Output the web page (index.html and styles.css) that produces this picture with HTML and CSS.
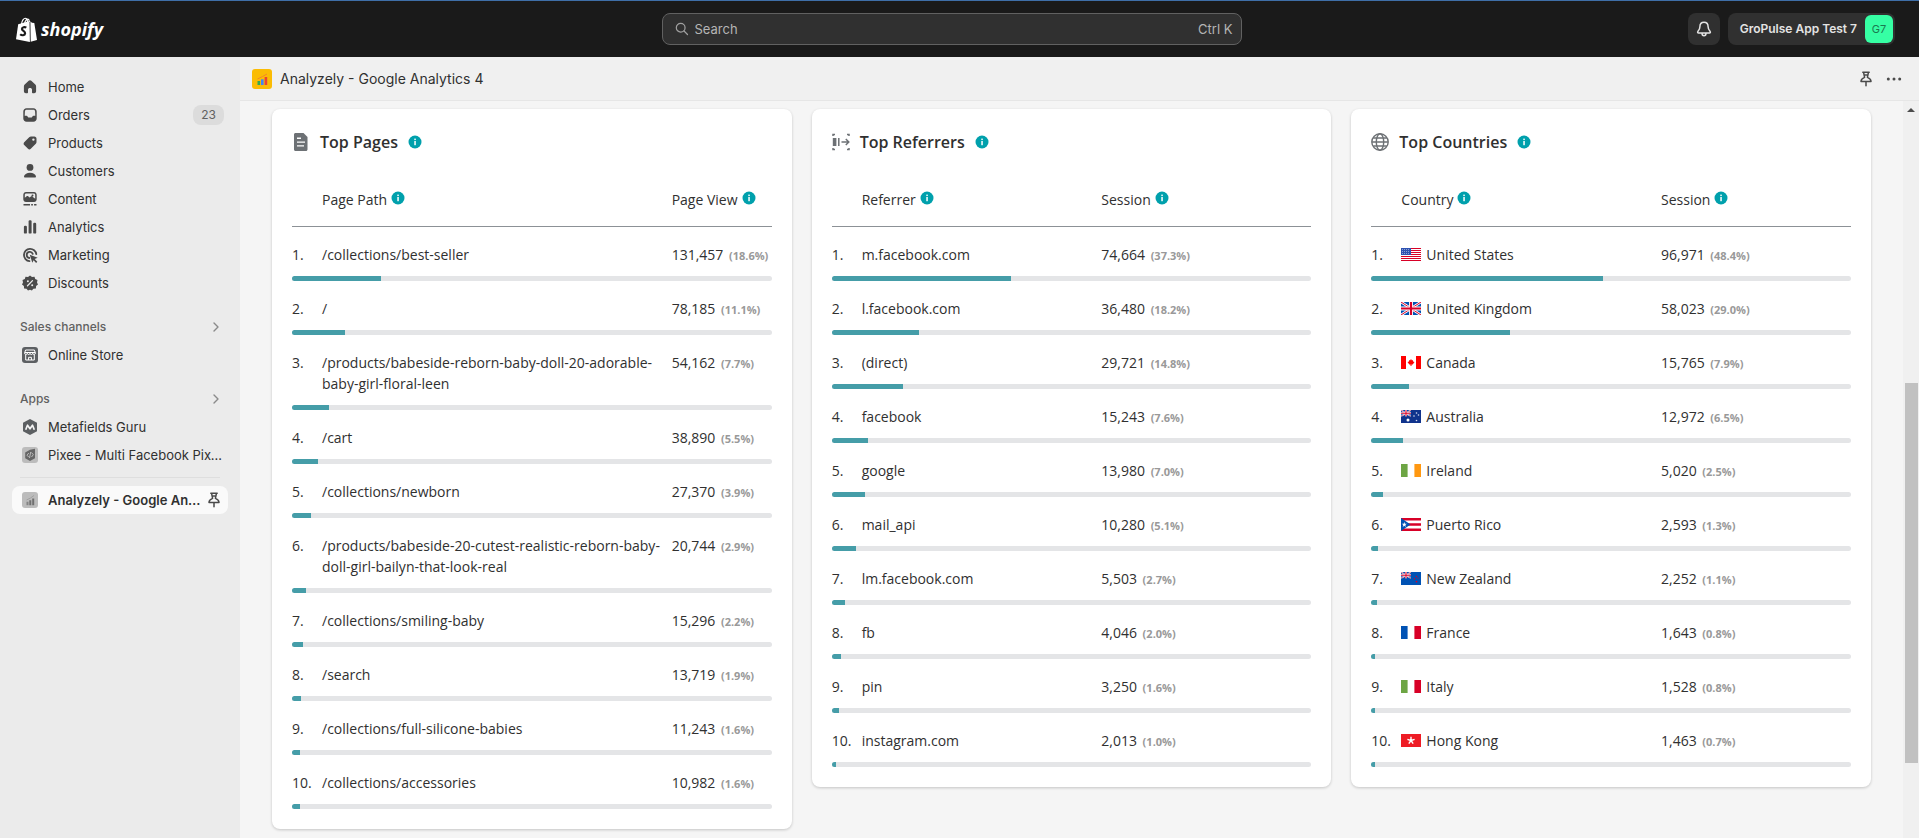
FILE: index.html
```html
<!DOCTYPE html>
<html lang="en">
<head>
<meta charset="utf-8">
<title>Analyzely - Google Analytics 4</title>
<link rel="stylesheet" href="styles.css">
</head>
<body>
<svg class="defs" aria-hidden="true">
  <symbol id="info" viewBox="0 0 14 14"><circle cx="7" cy="7" r="6.5" fill="#00a0ac"/><rect x="6.3" y="6" width="1.5" height="4.2" fill="#fff"/><rect x="6.3" y="3.6" width="1.5" height="1.5" fill="#fff"/></symbol>
  <symbol id="chev" viewBox="0 0 16 16"><path d="M6 4l4 4-4 4" fill="none" stroke="#8a8a8a" stroke-width="1.4" stroke-linecap="round" stroke-linejoin="round"/></symbol>
  <symbol id="pin" viewBox="0 0 16 16"><path d="M4.800 1.300h6.400M5.600 1.500l1 4.900c-2 .8-3.600 1.900-3.600 4.100h10c0-2.200-1.600-3.300-3.600-4.100l1-4.900M8 10.600v4.200M7.400 4h1.200" fill="none" stroke="#4a4a4a" stroke-width="1.500" stroke-linecap="round" stroke-linejoin="round"/></symbol>
  <symbol id="jack" viewBox="0 0 20 13"><path fill="#0052b4" d="M0 0h20v13H0z"/><path d="M0 0l20 13M20 0L0 13" stroke="#fff" stroke-width="2.600"/><path d="M0 0l20 13M20 0L0 13" stroke="#d80027" stroke-width="1"/><path d="M10 0v13M0 6.500h20" stroke="#fff" stroke-width="4"/><path d="M10 0v13M0 6.500h20" stroke="#d80027" stroke-width="2.200"/></symbol>
</svg>
<header class="topbar">
  <a class="brand" href="#" aria-label="Shopify home">
    <svg viewBox="0 0 21 25" width="21" height="25"><path fill="none" stroke="#fff" stroke-width="1.200" d="M5.500 7C6 3.500 8 1 9.600 1.300c1.500.2 2 2.500 2 4.500M8.600 6.500C9 4 10.600 1.900 12 2.200c1 .2 1.300 1.300 1.400 2.800"/><path fill="#fff" d="M2.200 7.200l11.300-3.100.4 20.900L0 22.300z"/><path fill="#fff" d="M14.400 4.200l1.500 1.500 2.400.2L21 23.100l-6.300 1.700z"/><path fill="none" stroke="#1a1a1a" stroke-width="2.200" d="M10.300 10.600C8.800 9.700 6 10 6 12c0 1.900 3.300 2 3.100 4.400-.2 2.300-3.400 2.300-4.900.9"/></svg>
    <span>shopify</span>
  </a>
  <label class="search">
    <svg viewBox="0 0 16 16" width="14" height="14"><circle cx="6.500" cy="6.500" r="5" fill="none" stroke="#a0a0a0" stroke-width="1.400"/><path d="M10.300 10.300l4 4" stroke="#a0a0a0" stroke-width="1.400" stroke-linecap="round"/></svg>
    <input type="text" placeholder="Search" aria-label="Search">
    <kbd>Ctrl K</kbd>
  </label>
  <div class="account">
    <button class="bell" aria-label="Notifications"><svg viewBox="0 0 16 16" width="16" height="16"><path d="M8 1.300c-2.600 0-4.100 1.900-4.100 4.400 0 2.600-.9 3.500-2 4.700-.6.700-.2 1.500.6 1.500h11c.8 0 1.200-.8.600-1.500-1.100-1.200-2-2.100-2-4.700 0-2.500-1.500-4.400-4.100-4.400zM6 12.200c0 1.600.9 2.500 2 2.500s2-.9 2-2.500" fill="none" stroke="#e3e3e3" stroke-width="1.500"/></svg></button>
    <button class="store"><span>GroPulse App Test 7</span><span class="avatar">G7</span></button>
  </div>
</header>
<div class="shell">
  <nav class="sidebar">
    <a class="item" href="#"><svg viewBox="0 0 16 16"><path d="M8 1.200c.5 0 .9.200 1.300.6l4 3.800c.5.500.8 1.100.8 1.800v4.800c0 1.100-.9 2-2 2h-1.300c-.5 0-.8-.3-.8-.8v-2.600c0-1-.8-1.700-2-1.700s-2 .7-2 1.700v2.600c0 .5-.3.800-.8.800H3.900c-1.100 0-2-.9-2-2V7.400c0-.7.300-1.300.8-1.800l4-3.800c.4-.4.800-.6 1.300-.6z"/></svg>Home</a>
    <a class="item" href="#"><svg viewBox="0 0 16 16"><path fill-rule="evenodd" d="M4.500 1.200h7c1.800 0 3.200 1.400 3.200 3.200v7.200c0 1.800-1.400 3.200-3.200 3.200h-7c-1.800 0-3.200-1.400-3.200-3.200V4.400c0-1.800 1.400-3.200 3.200-3.200zm.2 1.500c-1 0-1.800.7-1.800 1.700L2.700 8.800h1.800c.6 0 .9.400 1.200.9.300.6.800.9 1.500.9h1.600c.7 0 1.200-.3 1.500-.9.300-.5.600-.9 1.200-.9h1.800l-.2-4.400c0-1-.8-1.700-1.800-1.700z"/></svg>Orders<span class="count">23</span></a>
    <a class="item" href="#"><svg viewBox="0 0 16 16"><path fill-rule="evenodd" d="M9 1.500h3.300c1.300 0 2.200 1 2.200 2.200V7c0 .7-.2 1.300-.7 1.800l-5 5c-.8.800-2 .8-2.800 0L2.200 10c-.8-.8-.8-2 0-2.800l5-5C7.700 1.700 8.300 1.500 9 1.500zM11.400 5.800a1.200 1.200 0 1 0 0-2.400 1.200 1.200 0 0 0 0 2.400z"/></svg>Products</a>
    <a class="item" href="#"><svg viewBox="0 0 16 16"><circle cx="8" cy="4.400" r="3.400"/><path d="M8 9.700c3.200 0 5.200 1.300 5.900 3.300.3.900-.3 1.600-1.100 1.600H3.200c-.8 0-1.400-.7-1.100-1.600.7-2 2.700-3.300 5.900-3.300z"/></svg>Customers</a>
    <a class="item" href="#"><svg viewBox="0 0 16 16"><path fill-rule="evenodd" d="M4 1h8c1.500 0 2.700 1.200 2.700 2.700v4.600c0 1.500-1.200 2.700-2.700 2.700H4c-1.500 0-2.700-1.200-2.700-2.700V3.700C1.300 2.200 2.500 1 4 1zm.2 1.500c-.8 0-1.400.6-1.400 1.400v2.900l1.600-1.400c.6-.5 1.400-.5 2 0l1.200 1.100 1-.8c.6-.5 1.300-.5 1.900 0l2.700 2.100V3.900c0-.8-.6-1.400-1.400-1.400zM10.500 5.400a1 1 0 1 0 0-2 1 1 0 0 0 0 2z"/><path d="M1.500 13h6.500v1.600H1.500zM9.200 13h1.700v1.600H9.200zM12.100 13h2.400v1.600h-2.400z"/></svg>Content</a>
    <a class="item" href="#"><svg viewBox="0 0 16 16"><rect x="1.900" y="6.800" width="3" height="7.800" rx="1.200"/><rect x="6.600" y="1.300" width="3" height="13.300" rx="1.200"/><rect x="11.200" y="3.800" width="3" height="10.800" rx="1.200"/></svg>Analytics</a>
    <a class="item" href="#"><svg viewBox="0 0 16 16"><path d="M14.300 7.200A6.200 6.200 0 1 0 7.500 14.200M10.700 6.800A3.100 3.100 0 1 0 7.400 11" fill="none" stroke="#4a4a4a" stroke-width="1.800" stroke-linecap="round"/><path d="M7.800 7.800l7.900 3-3 1.200 2.600 2.700-1.200 1.200-2.500-2.600-1.300 2.500z"/></svg>Marketing</a>
    <a class="item" href="#"><svg viewBox="0 0 16 16"><path d="M8 .5l2 1.500 2.500-.3.700 2.400 2.300 1L15 7.600l1 2-1.900 1.500-.2 2.500-2.500.2L9.900 15.600 8 14.800l-2 .8-1.500-1.800-2.400-.2-.2-2.500L0 9.600l1-2-.5-2.500 2.300-1 .7-2.400L6 2z"/><path d="M5.500 10.800l5-5.200" stroke="#ebebeb" stroke-width="1.300" stroke-linecap="round"/><circle cx="5.900" cy="6.200" r="1" fill="#ebebeb"/><circle cx="10.200" cy="10.200" r="1" fill="#ebebeb"/></svg>Discounts</a>
    <a class="group" href="#">Sales channels<svg viewBox="0 0 16 16"><use href="#chev"/></svg></a>
    <a class="item" href="#"><svg viewBox="0 0 16 16"><rect width="16" height="16" rx="3" fill="#5c5f62"/><path d="M3.600 3h8.800l1 3c0 2-2.500 2-2.700.3C10.500 8 8.200 8 8 6.300 7.800 8 5.500 8 5.300 6.300 5.100 8 2.600 8 2.600 6zM3.700 8v5h8.600V8M6.600 13v-2.700h2.800V13M3 5.500h10" fill="none" stroke="#fff" stroke-width="1"/></svg>Online Store</a>
    <a class="group" href="#">Apps<svg viewBox="0 0 16 16"><use href="#chev"/></svg></a>
    <a class="item" href="#"><svg viewBox="0 0 16 16"><path fill="#5c5f62" d="M8 0l7 3.800v8.400L8 16l-7-3.800V3.800z"/><path d="M3.700 10.700l1.800-4.500L8 9.800l2.500-3.600 1.800 4.500" fill="none" stroke="#f4f4f4" stroke-width="1.700" stroke-linejoin="round"/></svg>Metafields Guru</a>
    <a class="item" href="#"><svg viewBox="0 0 16 16"><rect width="16" height="16" rx="3" fill="#bcbcbc"/><path fill="#666" d="M8 2.700l5-1v9.500l-5 2.700-4.800-2.700V5.500z"/><path d="M6.800 6L5 8.200l1.800 2M9.500 5.500l1.800 2.200-1.800 2.300M8.700 5l-1.200 6" fill="none" stroke="#bbb" stroke-width="1"/></svg><span class="clip">Pixee - Multi Facebook Pixels</span></a>
    <hr>
    <a class="item current" href="#"><svg viewBox="0 0 16 16"><rect width="16" height="16" rx="3" fill="#bcbcbc"/><path fill="#858585" d="M4.500 9.700h2v3.500h-2z"/><path fill="#707070" d="M7.300 8.300h2v4.900h-2zM10.200 6.500h2v6.700h-2z"/><path d="M4.500 8l4-2L12 3.500" stroke="#999" fill="none" stroke-width=".8"/></svg><span class="clip">Analyzely - Google Analytics 4</span><svg class="pinned" viewBox="0 0 16 16"><use href="#pin"/></svg></a>
  </nav>
  <div class="page">
    <div class="appbar">
      <svg viewBox="0 0 20 20" width="20" height="20"><rect width="20" height="20" rx="3" fill="#fbbc04"/><path fill="#34a853" d="M5.500 12h2.600v4H5.500z"/><path fill="#4285f4" d="M9 10.300h2.600V16H9z"/><path fill="#ea4335" d="M12.600 8h2.600v8h-2.600z"/><path d="M5.500 10l5-2.500L15 5" fill="none" stroke="#f08030" stroke-width=".9"/></svg>
      <h1>Analyzely - Google Analytics 4</h1>
      <button aria-label="Unpin app"><svg viewBox="0 0 16 16" width="16" height="16"><use href="#pin"/></svg></button>
      <button aria-label="More actions"><svg viewBox="0 0 16 16" width="16" height="16" fill="#4a4a4a"><circle cx="2.300" cy="8" r="1.500"/><circle cx="8" cy="8" r="1.500"/><circle cx="13.700" cy="8" r="1.500"/></svg></button>
    </div>
    <div class="view">
      <main class="cards" id="cards"></main>
      <div class="scrollbar"><svg viewBox="0 0 8 4" width="8" height="4"><path d="M4 0l4 4H0z" fill="#4c4c4c"/></svg><div class="thumb"></div></div>
    </div>
  </div>
</div>
<script src="app.js"></script>
</body>
</html>
```
FILE: styles.css
```css
* { box-sizing: border-box; }
body { margin: 0; min-height: 100vh; display: flex; flex-direction: column; background: #f5f5f5; color: #303030; font: 13px/20px Inter, sans-serif; }
a { color: inherit; text-decoration: none; }
button { border: 0; padding: 0; background: none; font: inherit; color: inherit; display: flex; align-items: center; justify-content: center; }
svg { display: block; flex: none; }
.defs { position: absolute; width: 0; height: 0; }

.topbar { height: 57px; display: grid; grid-template-columns: 1fr 580px 1fr; align-items: center; padding: 0 24px 0 8px; background: #1a1a1a; border-top: 1px solid #3f6fa8; }
.brand { display: flex; align-items: center; gap: 4px; padding-left: 8px; color: #fff; font: italic 700 18px/24px "Open Sans", sans-serif; }
.search { height: 32px; display: flex; align-items: center; gap: 6px; padding: 0 8px 0 12px; border: 1px solid #616161; border-radius: 8px; background: #303030; color: #b5b5b5; }
.search input { flex: 1; min-width: 0; padding: 0; border: 0; outline: 0; background: none; color: inherit; font: inherit; }
.search input::placeholder { color: #b5b5b5; opacity: 1; }
.search kbd { font: inherit; }
.account { display: flex; justify-content: flex-end; gap: 8px; }
.bell, .store { height: 32px; border-radius: 8px; background: #303030; }
.bell { width: 32px; }
.store { gap: 8px; padding: 0 2px 0 12px; color: #e3e3e3; font-size: 12px; font-weight: 600; }
.avatar { width: 28px; height: 28px; border-radius: 6px; background: #36ffa4; color: #1a7a50; font-size: 11px; font-weight: 400; line-height: 28px; }

.shell { flex: 1; display: flex; }
.sidebar { width: 240px; flex: none; padding: 16px 12px; background: #ebebeb; }
.item { height: 28px; display: flex; align-items: center; gap: 10px; padding: 0 4px 0 10px; border-radius: 8px; }
.item svg { width: 16px; height: 16px; fill: #4a4a4a; }
.count { margin-left: auto; padding: 0 8px; border-radius: 8px; background: #dcdcdc; color: #616161; font-size: 12px; }
.group { height: 28px; display: flex; align-items: center; justify-content: space-between; margin-top: 16px; padding: 0 4px 0 8px; color: #616161; font-size: 12px; font-weight: 500; }
.group svg { width: 16px; height: 16px; }
.clip { flex: 1; overflow: hidden; white-space: nowrap; text-overflow: ellipsis; }
.sidebar hr { height: 1px; margin: 8px; border: 0; background: #dedede; }
.current { padding-right: 6px; background: #fafafa; font-weight: 600; }
.item .pinned { margin-left: -8px; }

.page { flex: 1; min-width: 0; display: flex; flex-direction: column; }
.appbar { height: 44px; display: flex; align-items: center; gap: 8px; padding: 0 17px 0 12px; background: #f0f0f0; border-bottom: 1px solid #e6e6e6; }
.appbar h1 { flex: 1; margin: 0; font-size: 14px; font-weight: 400; }
.appbar button + button { margin-left: 4px; }
.view { flex: 1; display: flex; }
.cards { flex: 1; display: grid; grid-template-columns: repeat(3, 1fr); gap: 20px; align-items: start; padding: 8px 32px 10px; }
.scrollbar { width: 16px; flex: none; display: flex; flex-direction: column; align-items: center; padding-top: 7px; background: #f0f0f0; }
.thumb { width: 13px; height: 380px; margin-top: 271px; background: #c1c1c1; }

.card { padding: 20px; border-radius: 8px; background: #fff; box-shadow: 0 1px 3px rgba(0, 0, 0, .2); color: #303030; font: 14px/21px "Open Sans", sans-serif; }
.card h2 { display: flex; align-items: center; gap: 10px; margin: 0; font-size: 16px; font-weight: 600; line-height: 26px; color: #303030; }
.card h2 .mark { width: 18px; height: 18px; }
.card h2 .info { width: 14px; height: 14px; }
.card table { width: 100%; margin-top: 20px; border-collapse: separate; border-spacing: 0; table-layout: fixed; }
.card th, .card td { padding: 0; text-align: left; vertical-align: top; font-weight: 400; }
.card th { height: 52px; padding-top: 14px; border-bottom: 1px solid #8c9196; }
.th { display: flex; align-items: flex-start; gap: 4px; white-space: nowrap; }
.th .info { width: 14px; height: 14px; margin-top: 2px; }
.num { width: 30px; }
.pages .value { width: 100px; }
.referrers .value { width: 210px; }
.countries .value { width: 190px; }
.card tr.entry td { padding: 17px 0 11px; }
.card td.value { white-space: nowrap; }
.card td small { margin-left: 2px; color: #999; font-size: 11px; font-weight: 700; line-height: 11px; }
.name { display: flex; align-items: center; gap: 5px; }
.track { height: 5px; overflow: hidden; border-radius: 3px; background: #e4e5e7; }
.fill { height: 5px; background: #459da8; }
```
FILE: app.js
```js
const flags = {
  us: '<path fill="#fff" d="M0 0h20v13H0z"/><path stroke="#d80027" d="M0 .5h20M0 2.500h20M0 4.500h20M0 6.500h20M0 8.500h20M0 10.500h20M0 12.500h20"/><path fill="#2e52b2" d="M0 0h10v7H0z"/><path d="M1 1.500h8M1 3.500h8M1 5.500h8" stroke="#a7b6dd" stroke-width=".8" stroke-dasharray="1 1"/>',
  gb: '<use href="#jack"/>',
  ca: '<path fill="#fff" d="M0 0h20v13H0z"/><path fill="red" d="M0 0h5v13H0zM15 0h5v13h-5zM10 3l1 1.500 1-.5v1.500l1.500.5-1.800 2.500h-1.200V10h-1V8.500H8.300L6.500 6 8 5.500V4l1 .5z"/>',
  au: '<path fill="#10338c" d="M0 0h20v13H0z"/><use href="#jack" width="10" height="6.500"/><circle cx="7" cy="10" r="1.500" fill="#fff"/><g fill="#d5dcef"><circle cx="15.500" cy="3" r=".8"/><circle cx="13" cy="6" r=".8"/><circle cx="17.500" cy="5" r=".8"/><circle cx="15.500" cy="10.500" r=".8"/></g>',
  ie: '<path fill="#fff" d="M0 0h20v13H0z"/><path fill="#6da544" d="M0 0h6.600v13H0z"/><path fill="#ff9811" d="M13.400 0H20v13h-6.600z"/>',
  pr: '<path fill="#fff" d="M0 0h20v13H0z"/><path fill="#d80027" d="M0 0h20v2.500H0zM0 5.300h20v2.400H0zM0 10.500h20V13H0z"/><path fill="#0052b4" d="M0 0l9.500 6.500L0 13z"/><path fill="#fff" d="M3.300 4l.6 1.800h1.900L4.300 7l.6 1.900-1.600-1.200-1.600 1.200L2.300 7 .8 5.800h1.900z"/>',
  nz: '<path fill="#0052b4" d="M0 0h20v13H0z"/><use href="#jack" width="10" height="6.500"/><g fill="#d80027"><circle cx="15.500" cy="4.500" r=".7"/><circle cx="13.500" cy="6.800" r=".7"/><circle cx="17" cy="6" r=".6"/><circle cx="15.500" cy="9.600" r=".9"/></g>',
  fr: '<path fill="#fff" d="M0 0h20v13H0z"/><path fill="#0052b4" d="M0 0h6.600v13H0z"/><path fill="#d80027" d="M13.400 0H20v13h-6.600z"/>',
  it: '<path fill="#fff" d="M0 0h20v13H0z"/><path fill="#6da544" d="M0 0h6.600v13H0z"/><path fill="#d80027" d="M13.400 0H20v13h-6.600z"/>',
  hk: '<path fill="#ee1c25" d="M0 0h20v13H0z"/><path d="M10 6.500V2.800M10 6.500l3.600-1.200M10 6.500l2.200 3.200M10 6.500L7.800 9.700M10 6.500L6.400 5.300" stroke="#fff" stroke-width="1.400"/>'
};

const marks = {
  pages: '<path fill="#6d7175" fill-rule="evenodd" d="M3.500 0h8l4 4v12.500c0 .8-.7 1.500-1.500 1.500H3.500c-.8 0-1.500-.7-1.500-1.500v-15C2 .7 2.700 0 3.500 0zM5 4.500V6h4V4.500zm0 3.900v1.400h8V8.400zm0 3.800v1.400h7v-1.400z"/>',
  referrers: '<path d="M1 3V1.500h2M15 1.500h2V3M1 15v1.500h2M15 16.500h2V15M6.800 5v8M9.500 9h7M13.800 6l3 3-3 3" fill="none" stroke="#6d7175" stroke-width="1.500"/><path fill="#6d7175" d="M.8 5h3.600v8H.8z"/>',
  countries: '<g fill="none" stroke="#6d7175" stroke-width="1.400"><circle cx="9" cy="9" r="8.200"/><ellipse cx="9" cy="9" rx="3.700" ry="8.200"/><path d="M1 9h16M2.200 5h13.600M2.200 13h13.600"/></g>'
};

const data = [
  { id: 'pages', title: 'Top Pages', cols: ['Page Path', 'Page View'], rows: [
    ['/collections/best-seller', '131,457', 18.6], ['/', '78,185', 11.1],
    ['/products/babeside-reborn-baby-doll-20-adorable-baby-girl-floral-leen', '54,162', 7.7],
    ['/cart', '38,890', 5.5], ['/collections/newborn', '27,370', 3.9],
    ['/products/babeside-20-cutest-realistic-reborn-baby-doll-girl-bailyn-that-look-real', '20,744', 2.9],
    ['/collections/smiling-baby', '15,296', 2.2], ['/search', '13,719', 1.9],
    ['/collections/full-silicone-babies', '11,243', 1.6], ['/collections/accessories', '10,982', 1.6]] },
  { id: 'referrers', title: 'Top Referrers', cols: ['Referrer', 'Session'], rows: [
    ['m.facebook.com', '74,664', 37.3], ['l.facebook.com', '36,480', 18.2], ['(direct)', '29,721', 14.8],
    ['facebook', '15,243', 7.6], ['google', '13,980', 7.0], ['mail_api', '10,280', 5.1],
    ['lm.facebook.com', '5,503', 2.7], ['fb', '4,046', 2.0], ['pin', '3,250', 1.6], ['instagram.com', '2,013', 1.0]] },
  { id: 'countries', title: 'Top Countries', cols: ['Country', 'Session'], rows: [
    ['United States', '96,971', 48.4, 'us'], ['United Kingdom', '58,023', 29.0, 'gb'], ['Canada', '15,765', 7.9, 'ca'],
    ['Australia', '12,972', 6.5, 'au'], ['Ireland', '5,020', 2.5, 'ie'], ['Puerto Rico', '2,593', 1.3, 'pr'],
    ['New Zealand', '2,252', 1.1, 'nz'], ['France', '1,643', 0.8, 'fr'], ['Italy', '1,528', 0.8, 'it'],
    ['Hong Kong', '1,463', 0.7, 'hk']] }
];

const info = '<svg class="info" viewBox="0 0 14 14"><use href="#info"/></svg>';

const entry = ([name, value, pct, flag], i) => `
  <tr class="entry"><td>${i + 1}.</td>
  <td>${flag ? `<span class="name"><svg viewBox="0 0 20 13" width="20" height="13">${flags[flag]}</svg>${name}</span>` : name}</td>
  <td class="value">${value} <small>(${pct.toFixed(1)}%)</small></td></tr>
  <tr><td colspan="3"><div class="track"><div class="fill" style="width:${pct}%"></div></div></td></tr>`;

document.getElementById('cards').innerHTML = data.map(card => `
  <section class="card ${card.id}">
    <h2><svg class="mark" viewBox="0 0 18 18">${marks[card.id]}</svg>${card.title}${info}</h2>
    <table>
      <thead><tr><th class="num"></th><th><span class="th">${card.cols[0]}${info}</span></th><th class="value"><span class="th">${card.cols[1]}${info}</span></th></tr></thead>
      <tbody>${card.rows.map(entry).join('')}</tbody>
    </table>
  </section>`).join('');
```
